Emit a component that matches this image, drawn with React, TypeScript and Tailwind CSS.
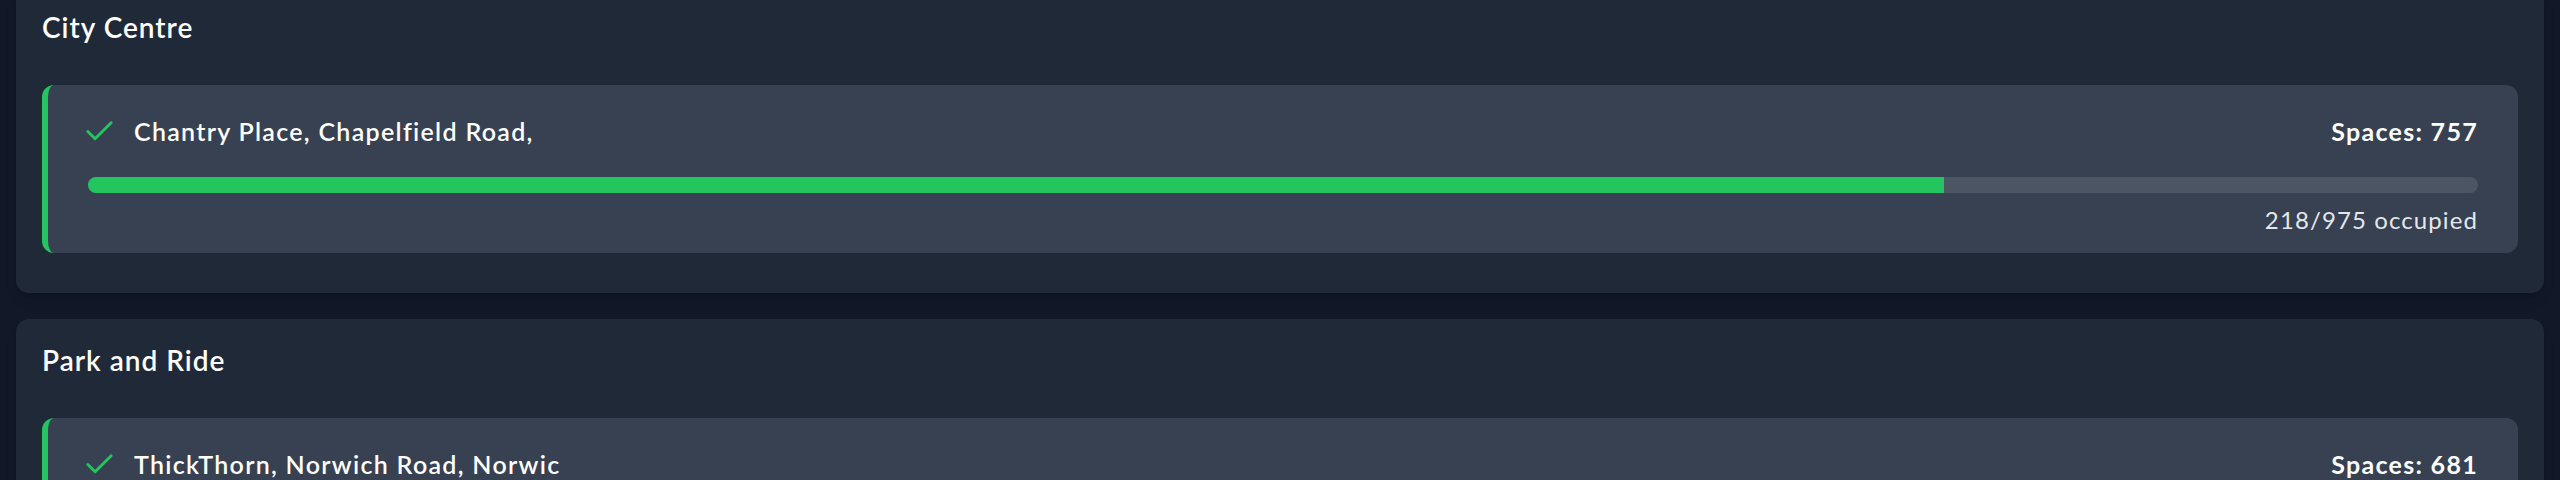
import { Check } from "lucide-react";

type CarPark = {
	name: string;
	spaces: number;
	occupied: number;
	capacity: number;
};

const groups: { title: string; parks: CarPark[] }[] = [
	{
		title: "City Centre",
		parks: [{ name: "Chantry Place, Chapelfield Road,", spaces: 757, occupied: 218, capacity: 975 }],
	},
	{
		title: "Park and Ride",
		parks: [{ name: "ThickThorn, Norwich Road, Norwic", spaces: 681, occupied: 46, capacity: 727 }],
	},
];

function CarParkCard({ park }: { park: CarPark }) {
	const free = (park.spaces / park.capacity) * 100;

	return (
		<div className="bg-[#374151] rounded-[12px] border-l-[6px] border-[#22c55e] pl-[40px] pr-[40px] pt-[26px] pb-[17px]">
			<div className="flex items-center justify-between h-[40px]">
				<div className="flex items-center">
					<Check size={35} strokeWidth={2} className="text-[#22c55e] -ml-[6px] mr-[17px]" />
					<span className="text-[25px] leading-[40px] font-semibold tracking-[1.3px] text-white">{park.name}</span>
				</div>
				<span className="text-[25px] leading-[40px] font-bold tracking-[1.3px] text-white">Spaces: {park.spaces}</span>
			</div>

			<div className="mt-[26px] h-[16px] rounded-full bg-[#4b5563] overflow-hidden">
				<div className="h-full bg-[#22c55e]" style={{ width: `${free}%` }} />
			</div>

			<div className="mt-[11px] text-right text-[24px] leading-[32px] tracking-[1.1px] text-gray-200">
				{park.occupied}/{park.capacity} occupied
			</div>
		</div>
	);
}

export default function App() {
	return (
		<div className="min-h-screen bg-[#111827] overflow-hidden" style={{ fontFamily: "Lato, 'Noto Sans', sans-serif" }}>
			<div className="-mt-[14px] px-[16px] flex flex-col gap-[26px]">
				{groups.map((group) => (
					<section key={group.title} className="bg-[#1f2937] rounded-[13px] shadow-lg px-[26px] pt-[26px] pb-[40px]">
						<h2 className="text-[28px] leading-[30px] font-semibold tracking-[1px] text-white mb-[43px]">{group.title}</h2>
						<div className="flex flex-col gap-[26px]">
							{group.parks.map((park) => (
								<CarParkCard key={park.name} park={park} />
							))}
						</div>
					</section>
				))}
			</div>
		</div>
	);
}
